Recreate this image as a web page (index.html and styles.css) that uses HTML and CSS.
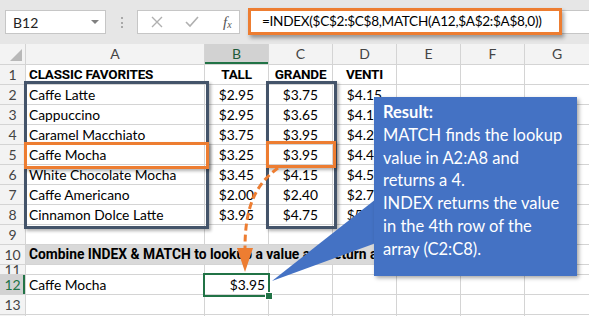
FILE: index.html
```html
<!DOCTYPE html>
<html lang="en">
<head>
    <meta charset="UTF-8">
    <title>INDEX MATCH</title>
    <link rel="stylesheet" href="styles.css">
</head>
<body>

    <div class="app">
        <!-- Pasek formuły -->
        <div class="toolbar">
            <div class="namebox"><span>B12</span><span class="caret"></span></div>
            <div class="grip"><span></span></div>
            <div class="fx-buttons">
                <svg width="12" height="12" viewBox="0 0 12 12"><path d="M1 1 L11 11 M11 1 L1 11" stroke="#b0b0b0" stroke-width="1.4" fill="none"/></svg>
                <svg width="14" height="12" viewBox="0 0 14 12"><path d="M1 6 L5 10 L13 1" stroke="#b0b0b0" stroke-width="1.6" fill="none"/></svg>
                <span class="fx">f<sub>x</sub></span>
            </div>
            <div class="formula">
                <div class="formula-hl">=INDEX($C$2:$C$8,MATCH(A12,$A$2:$A$8,0))</div>
            </div>
        </div>

        <!-- Arkusz -->
        <div class="sheet">
            <div class="corner"><span></span></div><div class="ch">A</div><div class="ch sel">B</div><div class="ch">C</div><div class="ch">D</div><div class="ch">E</div><div class="ch">F</div><div class="ch">G</div>

            <div class="rh">1</div><div class="c b">CLASSIC FAVORITES</div><div class="c b ctr">TALL</div><div class="c b ctr">GRANDE</div><div class="c b ctr">VENTI</div><div class="c"></div><div class="c"></div><div class="c"></div>
            <div class="rh">2</div><div class="c">Caffe Latte</div><div class="c ctr">$2.95</div><div class="c ctr">$3.75</div><div class="c ctr">$4.15</div><div class="c"></div><div class="c"></div><div class="c"></div>
            <div class="rh">3</div><div class="c">Cappuccino</div><div class="c ctr">$2.95</div><div class="c ctr">$3.65</div><div class="c ctr">$4.15</div><div class="c"></div><div class="c"></div><div class="c"></div>
            <div class="rh">4</div><div class="c">Caramel Macchiato</div><div class="c ctr">$3.75</div><div class="c ctr">$3.95</div><div class="c ctr">$4.25</div><div class="c"></div><div class="c"></div><div class="c"></div>
            <div class="rh">5</div><div class="c">Caffe Mocha</div><div class="c ctr">$3.25</div><div class="c ctr">$3.95</div><div class="c ctr">$4.40</div><div class="c"></div><div class="c"></div><div class="c"></div>
            <div class="rh">6</div><div class="c">White Chocolate Mocha</div><div class="c ctr">$3.45</div><div class="c ctr">$4.15</div><div class="c ctr">$4.55</div><div class="c"></div><div class="c"></div><div class="c"></div>
            <div class="rh">7</div><div class="c">Caffe Americano</div><div class="c ctr">$2.00</div><div class="c ctr">$2.40</div><div class="c ctr">$2.75</div><div class="c"></div><div class="c"></div><div class="c"></div>
            <div class="rh">8</div><div class="c">Cinnamon Dolce Latte</div><div class="c ctr">$3.95</div><div class="c ctr">$4.75</div><div class="c ctr">$5.25</div><div class="c"></div><div class="c"></div><div class="c"></div>
            <div class="rh">9</div><div class="c"></div><div class="c"></div><div class="c"></div><div class="c"></div><div class="c"></div><div class="c"></div><div class="c"></div>
            <div class="rh">10</div><div class="c b band">Combine INDEX &amp; MATCH to lookup a value and return a</div><div class="c"></div>
            <div class="rh short">11</div><div class="c"></div><div class="c"></div><div class="c"></div><div class="c"></div><div class="c"></div><div class="c"></div><div class="c"></div>
            <div class="rh sel">12</div><div class="c">Caffe Mocha</div><div class="c right">$3.95</div><div class="c"></div><div class="c"></div><div class="c"></div><div class="c"></div><div class="c"></div>
            <div class="rh">13</div><div class="c"></div><div class="c"></div><div class="c"></div><div class="c"></div><div class="c"></div><div class="c"></div><div class="c"></div>
            <div class="rh"></div><div class="c"></div><div class="c"></div><div class="c"></div><div class="c"></div><div class="c"></div><div class="c"></div><div class="c"></div>
        </div>

        <!-- Zaznaczenia na arkuszu -->
        <div class="frame frame-a"></div>
        <div class="frame frame-c"></div>
        <div class="hl hl-a"></div>
        <div class="hl hl-c"></div>
        <div class="selection"><span class="handle"></span></div>

        <svg class="overlay" width="589" height="316" viewBox="0 0 589 316">
            <path d="M278 168 C256 184 245 206 245 248" stroke="#ed7d31" stroke-width="3" fill="none" stroke-dasharray="7 4"/>
            <polygon points="237,248 253,248 245,272" fill="#ed7d31"/>
            <polygon points="272,281 376,199 376,243" fill="#4472c4"/>
        </svg>

        <div class="callout">
            <strong>Result:</strong><br>
            MATCH finds the lookup<br>
            value in A2:A8 and<br>
            returns a 4.<br>
            INDEX returns the value<br>
            in the 4th row of the<br>
            array (C2:C8).
        </div>
    </div>

</body>
</html>
```

FILE: styles.css
```css
body {
    margin: 0;
    font-family: Lato, 'Liberation Sans', sans-serif;
    background-color: #fff;
    color: #000;
}

.app {
    position: relative;
    width: 589px;
    height: 316px;
    overflow: hidden;
}

/* pasek formuły */
.toolbar {
    height: 44px;
    box-sizing: border-box;
    padding-top: 10px;
    background-color: #e6e6e6;
    display: flex;
    align-items: flex-start;
}

.namebox {
    margin-left: 5px;
    width: 101px;
    height: 24px;
    box-sizing: border-box;
    background-color: #fff;
    border: 1px solid #c6c6c6;
    display: flex;
    align-items: center;
    justify-content: space-between;
    padding: 0 6px 0 7px;
    font-size: 14px;
    color: #222;
}

.caret {
    border-left: 4px solid transparent;
    border-right: 4px solid transparent;
    border-top: 4px solid #808080;
}

.grip {
    width: 31px;
    height: 24px;
    display: flex;
    justify-content: center;
    align-items: center;
}

.grip span {
    width: 2px;
    height: 11px;
    background: repeating-linear-gradient(#a8a8a8 0 2px, transparent 2px 4.5px);
}

.fx-buttons {
    width: 103px;
    height: 24px;
    box-sizing: border-box;
    background-color: #fff;
    border: 1px solid #c6c6c6;
    display: flex;
    align-items: center;
    padding-left: 13px;
    gap: 22px;
}

.fx {
    font-family: 'Liberation Serif', serif;
    font-style: italic;
    font-size: 15px;
    color: #555;
    margin-left: 2px;
}

.fx sub {
    font-size: 10px;
    vertical-align: -1px;
}

.formula {
    flex: 1;
    margin-left: 8px;
    height: 24px;
    box-sizing: border-box;
    background-color: #fff;
    border-top: 1px solid #c6c6c6;
    border-bottom: 1px solid #c6c6c6;
}

.formula-hl {
    width: 314px;
    height: 27px;
    margin-top: -3px;
    box-sizing: border-box;
    border: 3px solid #ed7d31;
    box-shadow: 2px 3px 4px rgba(0, 0, 0, 0.35);
    background-color: #fff;
    padding-left: 11px;
    font-size: 13.6px;
    letter-spacing: -0.3px;
    line-height: 21px;
    white-space: nowrap;
}

/* arkusz */
.sheet {
    height: 272px;
    display: grid;
    grid-template-columns: 25px 178px repeat(5, 63px) 1fr;
    grid-template-rows: 20px repeat(10, 19px) 9px 19px 19px 1fr;
    gap: 1px;
    background-color: #d4d4d4;
}

.corner {
    background-color: #f3f3f3;
    position: relative;
}

.corner span {
    position: absolute;
    right: 3px;
    bottom: 3px;
    border-left: 12px solid transparent;
    border-bottom: 12px solid #b8b8b8;
}

.ch {
    background-color: #f3f3f3;
    color: #444;
    text-align: center;
    font-size: 14px;
    line-height: 20px;
}

.ch.sel {
    background-color: #d2d2d2;
    color: #1e5b3a;
    box-shadow: inset 0 -2px #217346;
}

.rh {
    background-color: #f3f3f3;
    color: #444;
    text-align: center;
    font-size: 14px;
    line-height: 19px;
    overflow: hidden;
}

.rh.short {
    line-height: 9px;
}

.rh.sel {
    background-color: #d2d2d2;
    color: #217346;
    box-shadow: inset -2px 0 #217346;
}

.c {
    background-color: #fff;
    font-size: 13.8px;
    line-height: 19px;
    padding: 0 3px;
    white-space: nowrap;
    overflow: hidden;
}

.c.b {
    font-family: Roboto, Lato, sans-serif;
    font-weight: bold;
    font-size: 13.5px;
    letter-spacing: -0.2px;
}

.c.ctr {
    text-align: center;
}

.c.right {
    text-align: right;
}

.c.band {
    grid-column: 2 / 8;
    background-color: #d9d9d9;
    font-size: 13.8px;
    letter-spacing: 0;
}

/* ramki */
.frame,
.hl {
    position: absolute;
    box-sizing: border-box;
    border: 3px solid #44546a;
    box-shadow: 2px 2px 3px rgba(0, 0, 0, 0.3);
}

.frame-a {
    left: 24px;
    top: 81px;
    width: 185px;
    height: 148px;
}

.frame-c {
    left: 266px;
    top: 81px;
    width: 71px;
    height: 148px;
}

.hl {
    border-color: #ed7d31;
}

.hl-a {
    left: 24px;
    top: 142px;
    width: 185px;
    height: 27px;
}

.hl-c {
    left: 266px;
    top: 141px;
    width: 70px;
    height: 27px;
}

.selection {
    position: absolute;
    left: 203px;
    top: 273px;
    width: 67px;
    height: 24px;
    box-sizing: border-box;
    border: 2px solid #217346;
}

.handle {
    position: absolute;
    right: -5px;
    bottom: -5px;
    width: 6px;
    height: 6px;
    background-color: #217346;
    border: 1px solid #fff;
}

.overlay {
    position: absolute;
    left: 0;
    top: 0;
}

.callout {
    position: absolute;
    left: 374px;
    top: 97px;
    width: 203px;
    height: 179px;
    box-sizing: border-box;
    padding: 4px 0 0 9px;
    background-color: #4472c4;
    box-shadow: 2px 2px 4px rgba(0, 0, 0, 0.35);
    color: #fff;
    font-size: 16.5px;
    line-height: 22.8px;
    white-space: nowrap;
}
```
